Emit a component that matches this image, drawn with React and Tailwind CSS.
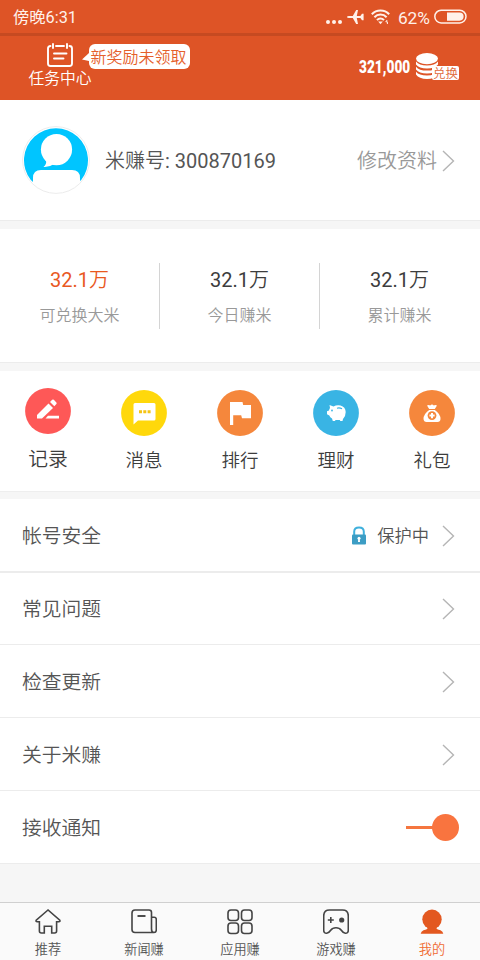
const FONT = "font-['Roboto','Noto_Sans_CJK_SC',sans-serif]";

function Chevron() {
  return (
    <svg className="mt-px block h-[22px] w-[13px] shrink-0" viewBox="0 0 13 22" fill="none" stroke="#b5b5b5" strokeWidth="1.4">
      <path d="M1 1 L11.5 11 L1 21" />
    </svg>
  );
}

function StatusBar() {
  return (
    <div className="flex h-9 items-center justify-between border-b-[3px] border-[#c64a21] pr-[13px] pl-[13px] text-[#fff1ea]">
      <span className="pt-[3px] text-[16.3px] leading-5">傍晚6:31</span>
      <div className="flex items-center">
        <svg className="mt-[2px] mr-[4px] h-[18px] w-[18px]" viewBox="0 0 18 18" fill="currentColor">
          <circle cx="3" cy="13" r="2" />
          <circle cx="9" cy="13" r="2" />
          <circle cx="15" cy="13" r="2" />
        </svg>
        <svg className="mr-[7px] h-[16px] w-[17px]" viewBox="0 0 17 16" fill="currentColor">
          <path d="M0 8 Q0 7.1 2 7 H5.8 L9.2 1 H11 L9.8 7 H13.4 L15 4.8 H16.6 V11.2 H15 L13.4 9 H9.8 L11 15 H9.2 L5.8 9 H2 Q0 8.9 0 8 Z" />
        </svg>
        <svg className="mr-[8px] h-[16px] w-[19px]" viewBox="0 0 19 16" fill="none" stroke="currentColor" strokeWidth="2">
          <path d="M0.8 5.2 C5.5 0.3 13.5 0.3 18.2 5.2" />
          <path d="M3.4 8.3 C6.7 4.7 12.3 4.7 15.6 8.3" />
          <path d="M6 11.2 C8 9 11 9 13 11.2" />
          <path d="M7.2 12.6 L9.5 15.2 L11.8 12.6 Z" fill="currentColor" stroke="none" />
          <path d="M16.2 11 L14.8 12.8 H16.4 V15" strokeWidth="1" />
        </svg>
        <span className="pt-[2px] text-[17.3px] leading-5">62%</span>
        <svg className="ml-[4px] h-[16px] w-[33px]" viewBox="0 0 33 16">
          <rect x="0.8" y="1.3" width="31.2" height="12.6" rx="6.3" fill="none" stroke="currentColor" strokeWidth="1.5" />
          <path d="M13 3.5 H25.5 A4.1 4.1 0 0 1 25.5 11.7 H13 Z" fill="currentColor" />
        </svg>
      </div>
    </div>
  );
}

function Header() {
  return (
    <header className="h-[100px] bg-[#de5426] text-white">
      <StatusBar />
      <div className="flex h-16 justify-between pr-[21px] pl-7">
        <div className="flex">
          <div className="flex w-16 flex-col items-center pt-[7px]">
            <svg className="h-6 w-[26px]" viewBox="0 0 26 24" fill="none" stroke="currentColor" strokeWidth="1.9" strokeLinecap="round">
              <path d="M3.5 3 Q1 3 1 5.5 V20.5 Q1 23 3.5 23 H22.5 Q25 23 25 20.5 V5.5 Q25 3 22.5 3 M9 3 H17" />
              <path d="M6 1 V5 M20 1 V5 M7 10.5 H19.5 M7 15.5 H16.5" />
            </svg>
            <span className="mt-px text-[15.8px] leading-[22px] font-[350] whitespace-nowrap">任务中心</span>
          </div>
          <div className="-ml-[10px] flex h-[33px] items-start pt-2">
            <svg className="mt-[9px] h-[9px] w-[7px]" viewBox="0 0 7 9">
              <path d="M7 0 V8 L0 6.5 Z" fill="#fff" />
            </svg>
            <span className="h-[25px] w-[101px] rounded-[6px] bg-white pt-px pr-[2px] text-center text-[16px] leading-[25px] font-[350] whitespace-nowrap text-[#e5602b]">新奖励未领取</span>
          </div>
        </div>
        <div className="flex items-start pt-[17px]">
          <span className="w-[51px] pt-[4px] text-[18px] leading-5 font-black">
            <span className="inline-block origin-left scale-x-[0.76]">321,000</span>
          </span>
          <div className="relative ml-[6px] h-7 w-[43px]">
            <svg className="h-[27px] w-[22px]" viewBox="0 0 22 27" fill="#fff">
              <ellipse cx="11" cy="5.6" rx="11" ry="5.6" />
              <path d="M0 8.5 Q3 12.6 11 12.6 Q19 12.6 22 8.5 V11.5 Q19 15.6 11 15.6 Q3 15.6 0 11.5 Z" />
              <path d="M0 13.7 Q3 17.6 11 17.6 Q19 17.6 22 13.7 V16.5 Q19 20.6 11 20.6 Q3 20.6 0 16.5 Z" />
              <path d="M0 18.8 Q3 22.6 11 22.6 Q19 22.6 22 18.8 V21.6 Q19 26 11 26 Q3 26 0 21.6 Z" />
            </svg>
            <span className="absolute top-[13px] left-[16px] h-[14px] w-[27px] rounded-[2px] bg-white text-center text-[12.5px] leading-[15px] font-[350] whitespace-nowrap text-[#e06a3c]">兑换</span>
          </div>
        </div>
      </div>
    </header>
  );
}

function Profile() {
  return (
    <section className="flex h-[120px] items-center bg-white pr-[25px] pl-[22px]">
      <svg className="h-[68px] w-[68px] shrink-0" viewBox="0 0 68 68">
        <circle cx="34" cy="34" r="33.4" fill="#fff" stroke="#ececec" strokeWidth="1" />
        <path d="M8.8 54 A32 32 0 1 1 59.2 54 L58 55 V52 Q58 44 50 44 H19 Q11 44 11 52 V56 Z" fill="#00c5ff" />
        <circle cx="34.5" cy="23.6" r="15.6" fill="#fff" />
        <path d="M24 34 Q25 38 21.5 41 Q27 41.5 32 38 Z" fill="#fff" />
      </svg>
      <span className="mt-px ml-[15px] text-[20px] leading-6 text-[#555]"><span className="font-[350]">米赚号</span>: 300870169</span>
      <span className="mt-[2px] mr-[5px] ml-auto text-[20px] leading-6 font-[350] text-[#999]">修改资料</span>
      <Chevron />
    </section>
  );
}

function Stats() {
  const items = [
    ["32.1", "可兑换大米", "text-[#e9591f]"],
    ["32.1", "今日赚米", "text-[#3d3d3d]"],
    ["32.1", "累计赚米", "text-[#3d3d3d]"],
  ];
  return (
    <section className="grid h-[133px] grid-cols-3 items-center bg-white">
      {items.map(([value, label, color], i) => (
        <div key={label} className={`flex h-[66px] flex-col items-center ${i < 2 ? "border-r border-[#d4d4d4]" : "pr-px"}`}>
          <span className={`mt-[5px] text-[20px] leading-6 ${color}`}>{value}<span className="font-[350]">万</span></span>
          <span className="mt-[12px] text-[16px] leading-6 font-[350] text-[#999]">{label}</span>
        </div>
      ))}
    </section>
  );
}

const ICONS = {
  pen: (
    <g fill="#fff">
      <path d="M12 27 L23.5 15.5 L28 20 L17 30.5 H12 Z" />
      <path d="M25 14 L27.2 11.8 Q28 11 28.8 11.8 L31.4 14.4 Q32 15.2 31.4 16 L29.3 18.3 Z" />
      <path d="M20.5 30.5 L23 27.8 H34 V30.5 Z" />
    </g>
  ),
  chat: (
    <g>
      <path d="M14 13 H33 Q34.5 13 34.5 14.5 V29 Q34.5 30.5 33 30.5 H17 L12.5 34.5 V14.5 Q12.5 13 14 13 Z" fill="#fff" />
      <path d="M18 20.3 H21 V23.3 H18 Z M22.3 20.3 H25.3 V23.3 H22.3 Z M26.6 20.3 H29.6 V23.3 H26.6 Z" fill="#f5c414" />
    </g>
  ),
  flag: <path d="M13 12 H25.5 L26.2 15 H34 V28.3 H25 L24.2 25.3 H16.2 V35 H13 Z" fill="#fff" />,
  pig: (
    <g>
      <path d="M16.5 15 L20.5 16.5 Q23.5 14.6 27.5 15.4 Q32.5 16.8 32.7 22 Q32.7 26.5 30 29 L29.5 31 H27.3 L26.8 30 H22.5 L22 31 H19.8 L19 28.5 Q17 27.5 16.3 25.5 L14 24.3 V21.3 L16 20.5 Q16.2 19 17 18 Z" fill="#fff" />
      <path d="M24 18.2 Q26.5 17.4 29 18.8" stroke="#39b4e4" strokeWidth="1.2" fill="none" />
      <circle cx="19" cy="20.5" r="0.9" fill="#39b4e4" />
    </g>
  ),
  bag: (
    <g>
      <path d="M18 15.6 Q19.7 14.4 21.2 15.4 Q23 13.7 24.8 15.4 Q26.3 14.4 28 15.6 L25.8 19 H20.2 Z" fill="#fff" />
      <path d="M20.2 20 H25.8 Q31.5 24 31.5 29 Q31.3 32 28.5 32 H17.5 Q14.8 32 14.5 29 Q14.5 24 20.2 20 Z" fill="#fff" />
      <circle cx="23" cy="25.6" r="4.4" fill="#f5873c" />
      <path d="M23 23 V28.2 M20.4 25.6 H25.6" stroke="#fff" strokeWidth="2" />
    </g>
  ),
};

function Actions() {
  const items = [
    ["记录", "pen", "#fe5857"],
    ["消息", "chat", "#ffd80b"],
    ["排行", "flag", "#f5873c"],
    ["理财", "pig", "#39b4e4"],
    ["礼包", "bag", "#f5873c"],
  ];
  return (
    <section className="grid h-[120px] grid-cols-5 bg-white">
      {items.map(([label, icon, color], i) => (
        <div key={label} className={`flex flex-col items-center ${i === 0 ? "pt-[17px]" : "pt-[18.5px]"}`}>
          <svg className="h-[46px] w-[46px]" viewBox="0 0 46 46">
            <circle cx="23" cy="23" r="22.9" fill={color} />
            {ICONS[icon]}
          </svg>
          <span className={`leading-6 text-[#3d3d3d] ${i === 0 ? "mt-[14px] text-[19.8px]" : "mt-[13px] text-[18.5px]"} font-[350]`}>{label}</span>
        </div>
      ))}
    </section>
  );
}

function Row({ label, children, className = "h-[73px] border-b" }) {
  return (
    <div className={`flex items-center border-[#ececec] pr-[25px] pl-[22px] ${className}`}>
      <span className="pt-[3px] text-[19.8px] leading-6 font-[350] text-[#555]">{label}</span>
      <div className="ml-auto flex items-center">{children}</div>
    </div>
  );
}

function Settings() {
  return (
    <section className="bg-white">
      <Row label="帐号安全" className="h-[74px] border-b-2">
        <svg className="mr-[11px] h-[19px] w-[14px]" viewBox="0 0 14 19">
          <path d="M2.2 9 V5.8 Q2.2 1.5 7 1.5 Q11.8 1.5 11.8 5.8 V9" fill="none" stroke="#3fb0dc" strokeWidth="2" />
          <rect y="8.5" width="14" height="10" rx="1" fill="#3c9dc4" />
          <circle cx="7" cy="12.2" r="1.5" fill="#fff" />
          <path d="M6.3 12 H7.7 L8 16 H6 Z" fill="#fff" />
        </svg>
        <span className="mr-[13px] pt-[2px] text-[17.3px] leading-6 font-[350] text-[#555]">保护中</span>
        <Chevron />
      </Row>
      <Row label="常见问题" className="h-[72px] border-b"><Chevron /></Row>
      <Row label="检查更新"><Chevron /></Row>
      <Row label="关于米赚"><Chevron /></Row>
      <Row label="接收通知">
        <div className="-mr-[4px] flex items-center">
          <div className="h-[3px] w-[27px] bg-[#f5763f]" />
          <div className="-ml-px h-[27px] w-[27px] rounded-full bg-[#f9743f]" />
        </div>
      </Row>
    </section>
  );
}

const TAB_ICONS = [
  <path d="M13 1 L1.2 11.2 Q0.6 12.8 2.2 12.8 H4.4 V22 Q4.4 24 6.4 24 H9.3 V17.3 H16.7 V24 H19.6 Q21.6 24 21.6 22 V12.8 H23.8 Q25.4 12.8 24.8 11.2 Z" />,
  <g>
    <path d="M22.5 23.5 H4 Q1 23.5 1 20.5 V4 Q1 1 4 1 H18 Q20.5 1 20.5 3.5 V20 Q20.5 23.5 23 23.5 Q25.3 23.5 25.3 21 V10.5 Q25.3 8.3 23.2 8.3 H20.5" />
    <path d="M6.5 7 H14.5" strokeWidth="1.9" />
  </g>,
  <g>
    <rect x="1" y="1" width="10.5" height="10.5" rx="3" />
    <rect x="14.5" y="1" width="10.5" height="10.5" rx="3" />
    <rect x="1" y="14" width="10.5" height="10.5" rx="3" />
    <rect x="14.5" y="14" width="10.5" height="10.5" rx="3" />
  </g>,
  <g>
    <path d="M6.5 1 H19.5 Q25.3 1 25.3 7 V21 Q25.3 24.3 22.3 24.2 Q20 24 18.3 21.3 Q16.5 18.8 13 18.8 Q9.5 18.8 7.7 21.3 Q6 24 3.7 24.2 Q0.7 24.3 0.7 21 V7 Q0.7 1 6.5 1 Z" />
    <path d="M7.8 8 V14 M4.8 11 H10.8" />
    <circle cx="18.7" cy="11" r="2.6" fill="#444" stroke="none" />
  </g>,
  <g fill="#e35820" stroke="none">
    <circle cx="13" cy="10.3" r="9.7" />
    <path d="M8.5 17 H17.5 V19.5 Q18 20.5 21.5 21.3 Q24 22.3 24.3 24.8 H1.7 Q2 22.3 4.5 21.3 Q8 20.5 8.5 19.5 Z" />
  </g>,
];

function TabBar() {
  const labels = ["推荐", "新闻赚", "应用赚", "游戏赚", "我的"];
  return (
    <nav className="grid h-[58px] grid-cols-5 border-t border-[#d0d0d0] bg-[#fafafa]">
      {labels.map((label, i) => (
        <div key={label} className="flex flex-col items-center pt-[6px]">
          <svg className="h-[26px] w-[26px]" viewBox="0 0 26 26" fill="none" stroke="#444" strokeWidth="1.6">
            {TAB_ICONS[i]}
          </svg>
          <span className={`mt-[5px] text-[13.2px] leading-5 font-[350] ${i === 4 ? "text-[#f06a31]" : "text-[#555]"}`}>{label}</span>
        </div>
      ))}
    </nav>
  );
}

export default function App() {
  return (
    <div className={`flex h-[960px] w-[480px] flex-col overflow-hidden bg-[#f6f6f6] ${FONT}`}>
      <Header />
      <Profile />
      <div className="h-[9px] border-t border-[#ececec]" />
      <Stats />
      <div className="h-[9px] border-t border-[#ececec]" />
      <Actions />
      <div className="h-2 border-t border-[#eeeeee]" />
      <Settings />
      <div className="flex-1" />
      <TabBar />
    </div>
  );
}
